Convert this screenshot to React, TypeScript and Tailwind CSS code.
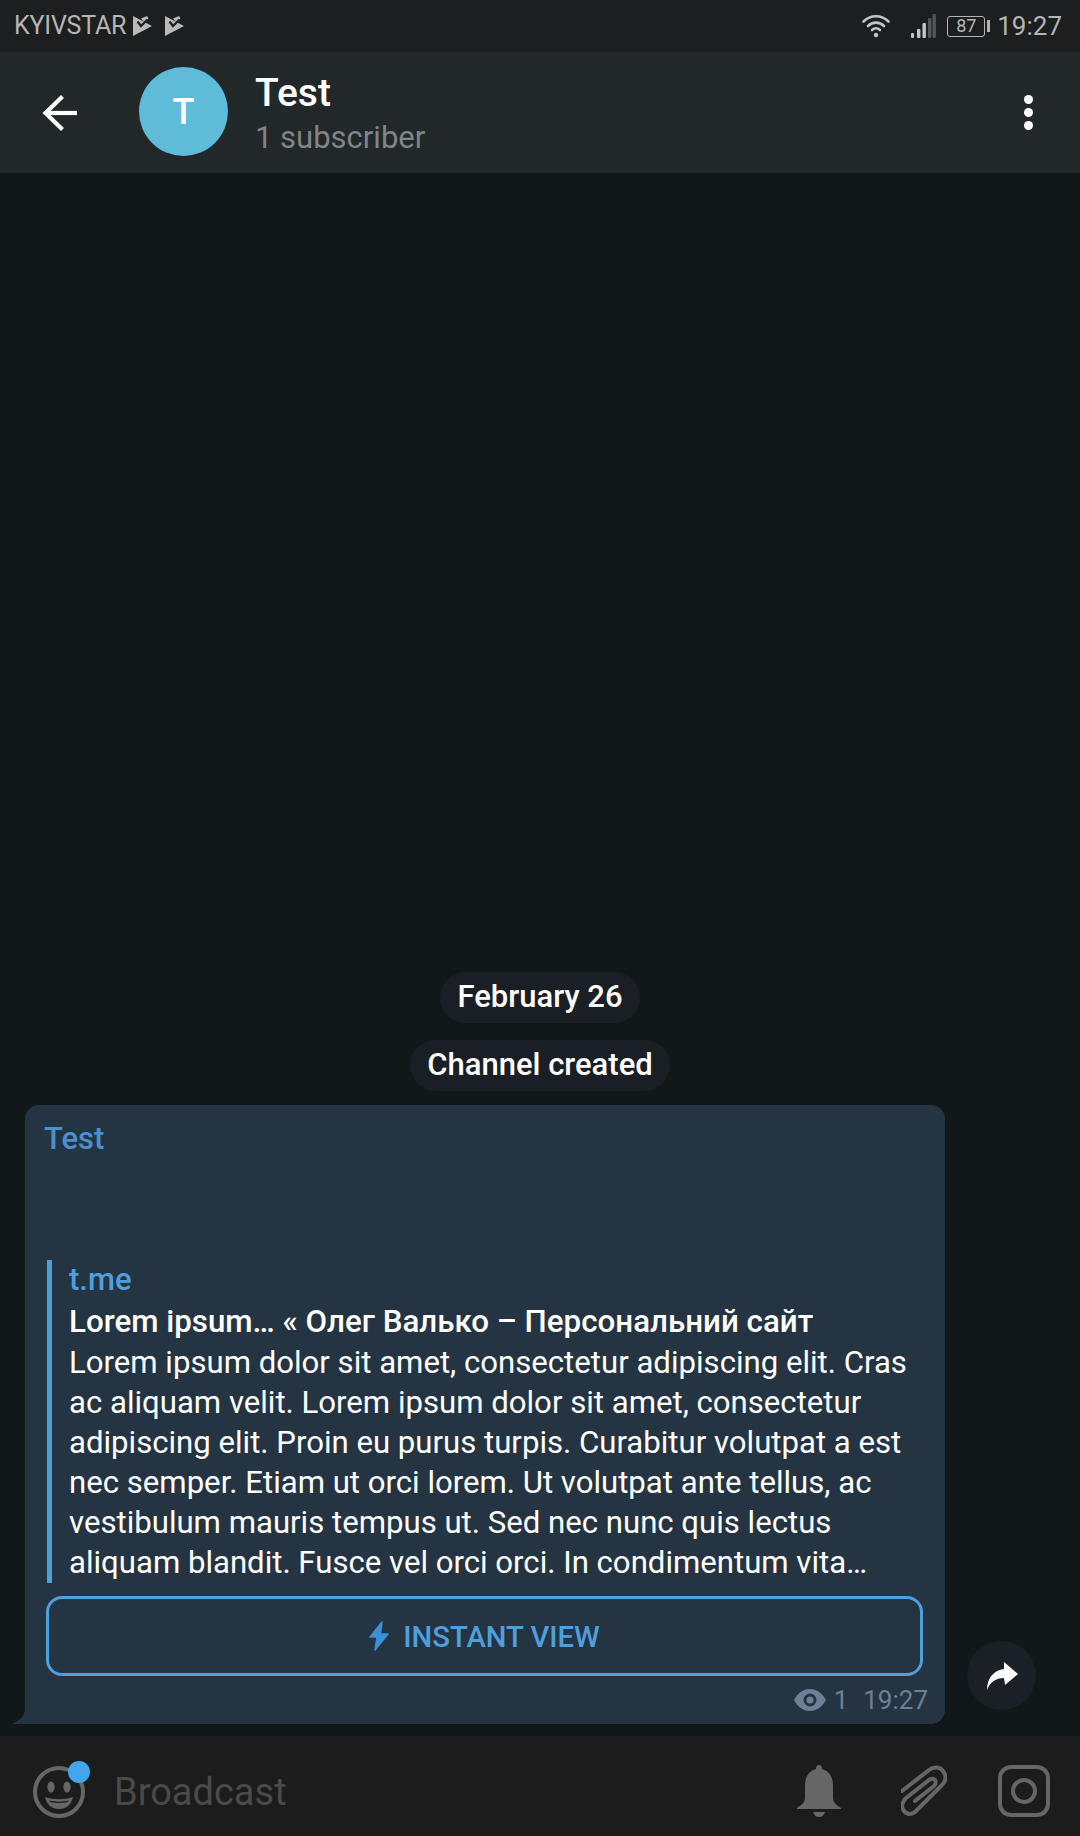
import React from 'react';

const bodyLines = [
    'Lorem ipsum dolor sit amet, consectetur adipiscing elit. Cras',
    'ac aliquam velit. Lorem ipsum dolor sit amet, consectetur',
    'adipiscing elit. Proin eu purus turpis. Curabitur volutpat a est',
    'nec semper. Etiam ut orci lorem. Ut volutpat ante tellus, ac',
    'vestibulum mauris tempus ut. Sed nec nunc quis lectus',
    'aliquam blandit. Fusce vel orci orci. In condimentum vita…',
];

const SimIcon: React.FC = () => (
    <svg width="19" height="20" viewBox="0 0 19 20">
        <path d="M0 0 L19 10 L0 20 Z" fill="#b9b9b9" />
        <path d="M8 2.5 L14 0 L15.5 2.5 L11 6 Z" fill="#b9b9b9" />
        <path d="M4.5 5.5 L8 10 L14.5 3.5" fill="none" stroke="#1c1e20" strokeWidth="2.2" />
    </svg>
);

const StatusBar: React.FC = () => (
    <div className="h-[52px] shrink-0 bg-[#1c1e20] flex items-center pl-[14px] pr-[18px] text-[#b5b5b5]">
        <span className="text-[25px] tracking-[-0.2px]">KYIVSTAR</span>
        <div className="ml-[7px]"><SimIcon /></div>
        <div className="ml-[13px]"><SimIcon /></div>
        <div className="flex-1" />
        <svg width="28" height="24" viewBox="0 0 28 24" fill="none" stroke="#c4c4c4" strokeWidth="2.6" strokeLinecap="round">
            <path d="M1.5 7.5 C8.5 0.5 19.5 0.5 26.5 7.5" />
            <path d="M6 12 C10.5 7.5 17.5 7.5 22 12" />
            <path d="M10 16 C12.5 13.8 15.5 13.8 18 16" />
            <circle cx="14" cy="21" r="2.2" fill="#c4c4c4" stroke="none" />
        </svg>
        <svg className="ml-[20px]" width="26" height="26" viewBox="0 0 26 26">
            <rect x="1" y="20" width="3" height="5" rx="1" fill="#c4c4c4" />
            <rect x="7" y="16" width="3.4" height="9" rx="1" fill="#c4c4c4" />
            <rect x="12.5" y="10" width="3.4" height="15" rx="1" fill="#c4c4c4" />
            <rect x="18" y="5" width="3.4" height="20" rx="1" fill="#555" />
            <rect x="22.5" y="1" width="3.4" height="24" rx="1" fill="#555" />
        </svg>
        <div className="ml-[11px] w-[38px] h-[21px] border border-[#b5b5b5] rounded-[3px] flex items-center justify-center text-[18px] leading-none">87</div>
        <div className="ml-[2px] w-[3px] h-[12px] bg-[#b5b5b5]" />
        <span className="ml-[7px] text-[26px]">19:27</span>
    </div>
);

const Header: React.FC = () => (
    <div className="h-[121px] shrink-0 bg-[#222829] flex items-center relative">
        <svg className="ml-[42px]" width="36" height="36" viewBox="0 0 36 36" fill="none" stroke="#fff" strokeWidth="4.2">
            <path d="M35 18 L3 18" />
            <path d="M20.5 1.5 L3.5 18 L20.5 34.5" />
        </svg>
        <div className="ml-[61px] mt-[-2px] w-[89px] h-[89px] rounded-full bg-[#5fbcd8] flex items-center justify-center text-white text-[36px] font-medium">T</div>
        <div className="ml-[27px] mt-[2px] flex flex-col">
            <span className="text-white text-[39px] font-medium leading-[42px]">Test</span>
            <span className="text-[#808587] text-[31px] leading-[36px] mt-[6px]">1 subscriber</span>
        </div>
        <div className="flex-1" />
        <div className="mr-[47px] flex flex-col gap-[4px]">
            <div className="w-[9px] h-[9px] rounded-full bg-white" />
            <div className="w-[9px] h-[9px] rounded-full bg-white" />
            <div className="w-[9px] h-[9px] rounded-full bg-white" />
        </div>
    </div>
);

const Pill: React.FC<{ text: string }> = ({ text }) => (
    <div className="h-[51px] px-[17px] rounded-[25px] bg-[#1a1e25] text-white text-[31px] font-medium flex items-center">{text}</div>
);

const Bubble: React.FC = () => (
    <div className="relative w-[920px] h-[619px] bg-[#253443] rounded-t-[14px] rounded-br-[14px] pt-[14px] pl-[20px] pr-[22px]">
        <svg className="absolute left-[-13px] bottom-0" width="14" height="14" viewBox="0 0 14 14" fill="#253443">
            <path d="M14 0 L14 14 L0 14 C7 11 12 7 13 0 Z" />
        </svg>
        <div className="ml-[-1px] text-[#4a90cf] text-[31px] font-medium leading-[40px]">Test</div>
        <div className="mt-[101px] ml-[2px] border-l-[5px] border-[#4f9fdd] pl-[17px]">
            <div className="text-[#4f9fdd] text-[31px] font-medium leading-[40px]">t.me</div>
            <div className="text-white text-[31.3px] font-medium leading-[43px] whitespace-nowrap">Lorem ipsum… « Олег Валько – Персональний сайт</div>
            {bodyLines.map((line, index) => (
                <div key={index} className="text-white text-[31.15px] leading-[40px] whitespace-nowrap">{line}</div>
            ))}
        </div>
        <div className="mt-[13px] ml-[1px] h-[80px] border-[3px] border-[#4f9fdd] rounded-[16px] flex items-center justify-center pt-[3px]">
            <svg className="mt-[-3px]" width="20" height="30" viewBox="0 0 20 30" fill="#3f8fd6" stroke="#3f8fd6" strokeWidth="1.5" strokeLinejoin="round">
                <path d="M13 1 L1 16 L8 16 L6 29 L19 13 L11.5 13 Z" />
            </svg>
            <span className="ml-[14px] text-[#4f9fdd] text-[29.2px] font-medium">INSTANT VIEW</span>
        </div>
        <div className="mt-[10px] flex items-center justify-end text-[#6c8196] text-[26px] leading-[28px]">
            <svg width="32" height="22" viewBox="0 0 32 22" fill="#6c8196">
                <path fillRule="evenodd" d="M16 0 C23 0 28.5 4.5 32 11 C28.5 17.5 23 22 16 22 C9 22 3.5 17.5 0 11 C3.5 4.5 9 0 16 0 Z M16 4.5 A6.5 6.5 0 1 0 16 17.5 A6.5 6.5 0 1 0 16 4.5 Z M16 7.5 A3.5 3.5 0 1 1 16 14.5 A3.5 3.5 0 1 1 16 7.5 Z" />
            </svg>
            <span className="ml-[8px]">1</span>
            <span className="ml-[15px] mr-[-5px]">19:27</span>
        </div>
    </div>
);

const ShareButton: React.FC = () => (
    <div className="w-[69px] h-[69px] mb-[14px] ml-[22px] rounded-full bg-[#1b1f26] flex items-center justify-center">
        <svg width="32" height="28" viewBox="0 0 32 28" fill="#fff">
            <path d="M18 0 L32 12 L19 23 L18 16 C10 16 4 20 1 28 C1 16 8 8 18 7 Z" />
        </svg>
    </div>
);

const InputBar: React.FC = () => (
    <div className="h-[100px] shrink-0 bg-[#1c1c1c] flex items-center relative pt-[10px]">
        <div className="relative ml-[33px] mt-[2px]">
            <svg width="52" height="52" viewBox="0 0 52 52" fill="none">
                <circle cx="26" cy="26" r="24" stroke="#666" strokeWidth="4" />
                <ellipse cx="18" cy="21" rx="3.6" ry="5.5" fill="#666" />
                <ellipse cx="34" cy="21" rx="3.6" ry="5.5" fill="#666" />
                <path fillRule="evenodd" d="M12 31 C20 34 32 34 40 31 C38 40 32 43 26 43 C20 43 14 40 12 31 Z M16 34.5 C22 36 30 36 36 34.5 C35 35.5 34.5 36 34 36.2 C29 37.2 23 37.2 18 36.2 C17.5 36 17 35.5 16 34.5 Z" fill="#666" />
            </svg>
            <div className="absolute left-[35px] top-[-5px] w-[22px] h-[22px] rounded-full bg-[#42a5ee]" />
        </div>
        <span className="ml-[29px] mt-[2px] text-[#4a4a4a] text-[38px] leading-[44px]">Broadcast</span>
        <div className="flex-1" />
        <svg className="ml-[1px]" width="44" height="52" viewBox="0 0 44 52" fill="#666">
            <path d="M22 0 C24 0 25 1.5 25 4 C32 6 36 12 36 20 L36 32 C36 37 39 40 44 43 L44 44 L0 44 L0 43 C5 40 8 37 8 32 L8 20 C8 12 12 6 19 4 C19 1.5 20 0 22 0 Z" />
            <path d="M16 47 L28 47 C27 50 25 52 22 52 C19 52 17 50 16 47 Z" />
        </svg>
        <svg className="ml-[60px]" width="46" height="52" viewBox="0 0 46 52" fill="none" stroke="#666" strokeWidth="4" strokeLinecap="round" strokeLinejoin="round">
            <path d="M1 26 L28 5 C33 1 39 2 42 6 C46 11 45 17 40 21 L16 45 C12 50 6 50 3 46 C0 42 1 37 5 33 L28 15 C31 13 33 14 34 15 C35 17 35 19 33 21 L14 36" />
        </svg>
        <svg className="ml-[51px] mr-[30px]" width="52" height="52" viewBox="0 0 52 52" fill="none" stroke="#666" strokeWidth="4">
            <rect x="2" y="2" width="48" height="48" rx="11" />
            <circle cx="26" cy="26" r="11" />
        </svg>
    </div>
);

const App: React.FC = () => (
    <div className="w-[1080px] h-[1836px] bg-[#121719] flex flex-col overflow-hidden font-['Roboto',sans-serif]">
        <StatusBar />
        <Header />
        <div className="flex-1 flex flex-col justify-end pb-[12px]">
            <div className="flex flex-col items-center gap-[17px] mb-[14px]">
                <Pill text="February 26" />
                <Pill text="Channel created" />
            </div>
            <div className="flex items-end pl-[25px]">
                <Bubble />
                <ShareButton />
            </div>
        </div>
        <InputBar />
    </div>
);

export default App;
